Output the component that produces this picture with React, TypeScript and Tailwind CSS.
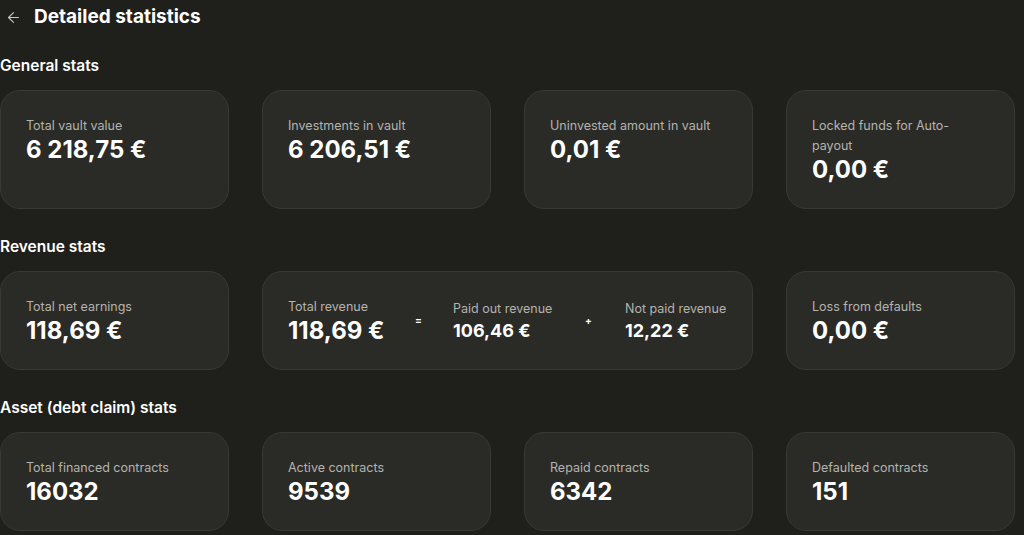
import React from "react";
import { ArrowLeft } from "lucide-react";

type Stat = { label: string; value: string };

const Card = ({ label, value }: Stat) => (
  <div className="rounded-[20px] border border-[#383834] bg-[#2a2a27] px-[25px] pb-6 pt-[25px]">
    <div className="text-[12.5px] leading-5 text-[#b4b4ae]">{label}</div>
    <div className="text-[24px] font-bold leading-7 text-white">{value}</div>
  </div>
);

const SubStat = ({ label, value }: Stat) => (
  <div className="whitespace-nowrap">
    <div className="text-[12.5px] leading-5 text-[#b4b4ae]">{label}</div>
    <div className="text-[18px] font-bold leading-6 text-white">{value}</div>
  </div>
);

const Section = ({
  title,
  first,
  children,
}: {
  title: string;
  first?: boolean;
  children: React.ReactNode;
}) => (
  <section className={first ? "mt-6" : "mt-[28px]"}>
    <h2 className="mb-[14px] text-[15.5px] font-semibold leading-5 text-white">
      {title}
    </h2>
    <div className="grid grid-cols-4 gap-[33px]">{children}</div>
  </section>
);

export default function App() {
  const general: Stat[] = [
    { label: "Total vault value", value: "6 218,75 €" },
    { label: "Investments in vault", value: "6 206,51 €" },
    { label: "Uninvested amount in vault", value: "0,01 €" },
    { label: "Locked funds for Auto-payout", value: "0,00 €" },
  ];
  const assets: Stat[] = [
    { label: "Total financed contracts", value: "16032" },
    { label: "Active contracts", value: "9539" },
    { label: "Repaid contracts", value: "6342" },
    { label: "Defaulted contracts", value: "151" },
  ];

  return (
    <div
      className="min-h-screen w-full bg-[#1f1f1c] text-white"
      style={{ fontFamily: "Inter, 'Noto Sans', sans-serif" }}
    >
      <div className="w-[1015px]">
        <div className="flex h-8 items-center gap-3 pl-[5px] pt-[2px]">
          <ArrowLeft size={17} strokeWidth={1.5} className="text-[#c8c8c2]" />
          <h1 className="text-[19px] font-bold leading-7">Detailed statistics</h1>
        </div>

        <Section title="General stats" first>
          {general.map((s) => (
            <Card key={s.label} {...s} />
          ))}
        </Section>

        <Section title="Revenue stats">
          <Card label="Total net earnings" value="118,69 €" />
          <div className="col-span-2 flex items-center rounded-[20px] border border-[#383834] bg-[#2a2a27] px-[25px] pb-6 pt-[25px]">
            <div className="w-[127px] whitespace-nowrap">
              <div className="text-[12.5px] leading-5 text-[#b4b4ae]">Total revenue</div>
              <div className="text-[24px] font-bold leading-7 text-white">118,69 €</div>
            </div>
            <div className="w-[38px] pb-[2px] text-[10px] font-bold">=</div>
            <div className="w-[132px]">
              <SubStat label="Paid out revenue" value="106,46 €" />
            </div>
            <div className="w-[40px] pb-[2px] text-[10px] font-bold">+</div>
            <SubStat label="Not paid revenue" value="12,22 €" />
          </div>
          <Card label="Loss from defaults" value="0,00 €" />
        </Section>

        <Section title="Asset (debt claim) stats">
          {assets.map((s) => (
            <Card key={s.label} {...s} />
          ))}
        </Section>
      </div>
    </div>
  );
}
